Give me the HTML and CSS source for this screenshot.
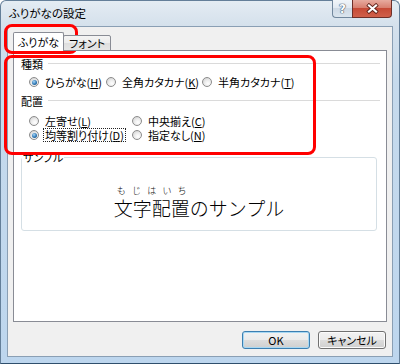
FILE: index.html
```html
<!DOCTYPE html>
<html lang="ja">
<head>
<meta charset="utf-8">
<title>ふりがなの設定</title>
<link rel="stylesheet" href="styles.css">
</head>
<body>
<div class="window">
  <div class="titlebar">
    <div class="title">ふりがなの設定</div>
    <div class="caption">
      <div class="cap-help">?</div>
      <div class="cap-close">
        <svg width="13" height="11" viewBox="0 0 13 11">
          <path d="M3 2.5 L10 8.5 M10 2.5 L3 8.5" stroke="#5a1e16" stroke-width="3.8" stroke-linecap="square"/>
          <path d="M3 2.5 L10 8.5 M10 2.5 L3 8.5" stroke="#ffffff" stroke-width="2.2" stroke-linecap="square"/>
        </svg>
      </div>
    </div>
  </div>
  <div class="client">
    <div class="tabs">
      <div class="tab active">ふりがな</div>
      <div class="tab">フォント</div>
    </div>
    <div class="panel">
      <div class="section"><span class="section-label">種類</span><span class="rule"></span></div>
      <div class="options options-type">
        <label class="opt"><span class="radio on"></span><span>ひらがな(<u>H</u>)</span></label>
        <label class="opt"><span class="radio"></span><span>全角カタカナ(<u>K</u>)</span></label>
        <label class="opt"><span class="radio"></span><span>半角カタカナ(<u>T</u>)</span></label>
      </div>
      <div class="section section-2"><span class="section-label">配置</span><span class="rule"></span></div>
      <div class="options options-align">
        <label class="opt"><span class="radio"></span><span>左寄せ(<u>L</u>)</span></label>
        <label class="opt"><span class="radio"></span><span>中央揃え(<u>C</u>)</span></label>
        <label class="opt"><span class="radio on"></span><span class="focus">均等割り付け(<u>D</u>)</span></label>
        <label class="opt"><span class="radio"></span><span>指定なし(<u>N</u>)</span></label>
      </div>
      <fieldset class="sample">
        <legend>サンプル</legend>
        <div class="sample-body">
          <div class="sample-text">
            <div class="ruby"><span>も</span><span>じ</span><span>は</span><span>い</span><span>ち</span></div>
            <div class="base">文字配置のサンプル</div>
          </div>
        </div>
      </fieldset>
    </div>
    <div class="buttons">
      <button class="btn default">OK</button>
      <button class="btn">キャンセル</button>
    </div>
  </div>
  <div class="mark mark-tab"></div>
  <div class="mark mark-options"></div>
</div>
</body>
</html>
```
FILE: styles.css
```css
* { box-sizing: border-box; }
html, body { margin: 0; padding: 0; }
body {
  width: 400px;
  height: 364px;
  overflow: hidden;
  background: #ffffff;
  font-family: "Noto Sans CJK JP", "Noto Sans", sans-serif;
  font-size: 11px;
  font-feature-settings: "palt";
  color: #000;
}

.window {
  position: relative;
  width: 400px;
  height: 364px;
  display: flex;
  flex-direction: column;
  padding: 0 6px 6px;
  border: 1px solid #647f99;
  border-bottom-color: #2f4f6c;
  border-radius: 6px 6px 0 0;
  background: linear-gradient(to bottom, #e4ecf3 0px, #d5e1ec 24px, #c6daec 80px, #bdd6ee 100%);
}

.titlebar {
  height: 25px;
  margin: 0 -6px;
  display: flex;
  justify-content: space-between;
  align-items: flex-start;
}
.title {
  padding-left: 8px;
  line-height: 25px;
  font-size: 11.5px;
  color: #000;
}
.caption {
  display: flex;
  margin-top: -1px;
  margin-right: 7px;
}
.cap-help {
  width: 20px;
  height: 18px;
  border: 1px solid #71879d;
  border-top: none;
  border-right: none;
  border-radius: 0 0 0 4px;
  background: linear-gradient(to bottom, #f1f5f9 0, #e2eaf2 45%, #cdd9e5 50%, #dbe5ee 100%);
  display: flex;
  align-items: center;
  justify-content: center;
  font: bold 12px "DejaVu Sans", sans-serif;
  color: #ffffff;
  text-shadow: 0 0 1px #3f5166, 0 0 1px #3f5166, 0 0 1px #3f5166;
}
.cap-close {
  width: 40px;
  height: 18px;
  border: 1px solid #6e2f28;
  border-top: none;
  border-radius: 0 0 4px 0;
  background: linear-gradient(to bottom, #e7ab9f 0, #d88070 45%, #c64a36 50%, #d0604a 100%);
  display: flex;
  align-items: center;
  justify-content: center;
}

.client {
  flex: 1;
  background: #f0f0f0;
  border: 1px solid #8a9fb4;
  padding: 5px 5px 0;
  display: flex;
  flex-direction: column;
}

.tabs {
  display: flex;
  align-items: flex-end;
  height: 19px;
  margin-bottom: -1px;
  position: relative;
  z-index: 1;
}
.tab {
  width: 48px;
  height: 16px;
  margin-left: -1px;
  border: 1px solid #898c95;
  border-radius: 2px 2px 0 0;
  background: linear-gradient(to bottom, #f4f4f4 0, #ececec 50%, #dedede 51%, #e6e6e6 100%);
  line-height: 14px;
  text-align: center;
}
.tab.active {
  width: 51px;
  height: 19px;
  margin-left: 0;
  border-bottom: none;
  background: #ffffff;
  line-height: 18px;
  position: relative;
  z-index: 2;
}

.panel {
  height: 272px;
  background: #ffffff;
  border: 1px solid #898c95;
  padding: 6px 6px 0 7px;
}

.section {
  display: flex;
  align-items: center;
  height: 14px;
  line-height: 14px;
}
.section-2 { margin-top: 5px; }
.rule {
  flex: 1;
  height: 1px;
  margin: -1px 0 0 5px;
  background: #dadada;
}

.options {
  display: grid;
  grid-auto-rows: 14px;
  margin-left: 8px;
}
.options-type {
  grid-template-columns: 77px 96px auto;
  margin-top: 4px;
}
.options-align {
  grid-template-columns: 103px auto;
  margin-top: 6px;
}
.opt {
  display: flex;
  align-items: center;
  gap: 6px;
  height: 14px;
  line-height: 14px;
  white-space: nowrap;
}
.radio {
  width: 10px;
  height: 10px;
  flex: none;
  border-radius: 50%;
  border: 1px solid #8c8c8c;
  background: radial-gradient(circle at 62% 68%, #ffffff 0, #ececec 45%, #c8c8c8 100%);
  display: flex;
  align-items: center;
  justify-content: center;
}
.radio.on::after {
  content: "";
  width: 5px;
  height: 5px;
  border-radius: 50%;
  background: radial-gradient(circle at 40% 35%, #a9d8fa 0, #2f78b4 55%, #0d3b66 100%);
}
.focus {
  display: inline-block;
  line-height: 12px;
  outline: 1px dotted #222;
  padding: 0 1px;
  margin-left: -1px;
}
u { text-decoration-thickness: 1px; text-underline-offset: 1px; }

.sample {
  margin: 8px 3px 0 0;
  padding: 22px 0 11px;
  min-width: 0;
  border: 1px solid #d5dfe5;
  border-radius: 3px;
}
.sample legend {
  padding: 0 1px;
  line-height: 14px;
  font-size: 11px;
}
.sample-body {
  text-align: center;
}
.sample-text {
  display: inline-block;
  text-align: left;
  font-feature-settings: normal;
  font-weight: 300;
}
.ruby {
  width: 76px;
  display: flex;
  justify-content: space-around;
  font-size: 9px;
  line-height: 10px;
}
.base {
  margin-top: 2px;
  font-size: 19px;
  line-height: 20px;
  white-space: nowrap;
}

.buttons {
  display: flex;
  justify-content: flex-end;
  gap: 8px;
  margin-top: 9px;
  padding-right: 1px;
}
.btn {
  width: 68px;
  height: 18px;
  padding: 0;
  border: 1px solid #707070;
  border-radius: 3px;
  background: linear-gradient(to bottom, #f2f2f2 0, #ebebeb 50%, #dddddd 51%, #cfcfcf 100%);
  box-shadow: inset 0 0 0 1px #fbfbfb;
  font-family: "Noto Sans CJK JP", sans-serif;
  font-size: 11px;
  font-feature-settings: "palt";
  line-height: 16px;
  color: #000;
}
.btn.default {
  border-color: #3c7fb1;
  box-shadow: inset 0 0 0 1px #a8d8f3;
}

.mark {
  position: absolute;
  border: 3px solid #ff0000;
  border-radius: 8px;
  pointer-events: none;
}
.mark-tab {
  left: 3px;
  top: 23px;
  width: 74px;
  height: 30px;
}
.mark-options {
  left: 3px;
  top: 54px;
  width: 312px;
  height: 100px;
}
```
